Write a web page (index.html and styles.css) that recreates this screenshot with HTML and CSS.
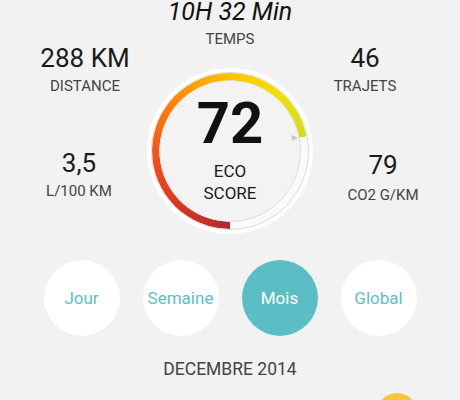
FILE: index.html
```html
<!DOCTYPE html>
<html>

<head>
  <title>Eco Score</title>
  <link rel="stylesheet" href="styles.css">
</head>

<body>
  <div class="app">
    <div class="dashboard">
      <div class="side side-left">
        <div class="stat stat-top-left">
          <div class="stat-value">288 KM</div>
          <div class="stat-label">DISTANCE</div>
        </div>
        <div class="stat stat-bottom-left">
          <div class="stat-value">3,5</div>
          <div class="stat-label">L/100 KM</div>
        </div>
      </div>

      <div class="center">
        <div class="duration">10H 32 Min</div>
        <div class="duration-label">TEMPS</div>

        <div class="gauge">
          <div class="gauge-track"></div>
          <div class="gauge-track-inner"></div>
          <div class="gauge-arc"></div>
          <div class="gauge-marker"></div>
          <div class="gauge-score">72</div>
          <div class="gauge-caption">ECO<br>SCORE</div>
        </div>
      </div>

      <div class="side side-right">
        <div class="stat stat-top-right">
          <div class="stat-value">46</div>
          <div class="stat-label">TRAJETS</div>
        </div>
        <div class="stat stat-bottom-right">
          <div class="stat-value">79</div>
          <div class="stat-label">CO2 G/KM</div>
        </div>
      </div>
    </div>

    <div class="periods">
      <button class="period">Jour</button>
      <button class="period">Semaine</button>
      <button class="period active">Mois</button>
      <button class="period">Global</button>
    </div>

    <div class="month">DECEMBRE 2014</div>

    <div class="fab"></div>
  </div>
</body>

</html>
```

FILE: styles.css
```css
body {
  margin: 0;
  font-family: Roboto, "Liberation Sans", sans-serif;
  background: #f2f2f2;
  color: #1a1a1a;
}

.app {
  position: relative;
  height: 400px;
  overflow: hidden;
}

.dashboard {
  display: flex;
}

.side {
  width: 147px;
  display: flex;
  flex-direction: column;
  align-items: flex-start;
  padding-top: 43px;
}

.stat {
  width: 100px;
  text-align: center;
}

.stat-value {
  font-size: 26px;
  line-height: 30px;
}

.stat-label {
  font-size: 15px;
  line-height: 18px;
  margin-top: 4px;
  color: #444;
}

.stat-top-left {
  margin-left: 35px;
}

.stat-bottom-left {
  margin-left: 29px;
  margin-top: 53px;
}

.stat-top-right {
  margin-left: 2px;
}

.stat-bottom-right {
  margin-left: 20px;
  margin-top: 55px;
}

.stat-bottom-right .stat-label {
  margin-top: 6px;
}

.center {
  width: 166px;
  text-align: center;
}

.duration {
  font-size: 25px;
  line-height: 24px;
  font-style: italic;
  color: #111;
  white-space: nowrap;
  margin: 0 -40px;
}

.duration-label {
  font-size: 15px;
  line-height: 18px;
  margin-top: 6px;
  color: #444;
}

/* gauge */
.gauge {
  position: relative;
  width: 166px;
  height: 166px;
  margin-top: 20px;
  border-radius: 50%;
  background: #fff;
  box-sizing: border-box;
  padding-top: 25px;
}

.gauge-track,
.gauge-track-inner,
.gauge-arc {
  position: absolute;
  border-radius: 50%;
  box-sizing: border-box;
}

.gauge-track {
  top: 4px;
  left: 4px;
  width: 158px;
  height: 158px;
  border: 1px solid #dcdcdc;
  background: #fafafa;
}

.gauge-track-inner {
  top: 12px;
  left: 12px;
  width: 142px;
  height: 142px;
  border: 1px solid #dcdcdc;
  background: #f3f3f3;
}

.gauge-arc {
  top: 5px;
  left: 5px;
  width: 156px;
  height: 156px;
  background: conic-gradient(from 180deg,
      #b3282d 0deg,
      #e33b1e 55deg,
      #f7541a 90deg,
      #ff8a00 135deg,
      #ffc400 180deg,
      #f2e000 220deg,
      #d3db1f 259deg,
      transparent 259deg);
  -webkit-mask: radial-gradient(circle, transparent 70.5px, #000 71px);
  mask: radial-gradient(circle, transparent 70.5px, #000 71px);
}

.gauge-marker {
  position: absolute;
  left: 145px;
  top: 67px;
  width: 0;
  height: 0;
  border-left: 6px solid #c8c8c8;
  border-top: 3px solid transparent;
  border-bottom: 3px solid transparent;
}

.gauge-score {
  position: relative;
  font-size: 58px;
  line-height: 60px;
  font-weight: bold;
  color: #111;
}

.gauge-caption {
  position: relative;
  font-size: 17px;
  line-height: 22px;
  margin-top: 7px;
  color: #1a1a1a;
}

/* period buttons */
.periods {
  display: flex;
  justify-content: center;
  gap: 23px;
  margin-top: 26px;
}

.period {
  width: 76px;
  height: 76px;
  border: none;
  border-radius: 50%;
  background: #fff;
  color: #5cc0c7;
  font-family: inherit;
  font-size: 17px;
  padding: 0;
  cursor: pointer;
}

.period.active {
  background: #5bbec5;
  color: #fff;
}

.month {
  text-align: center;
  font-size: 17.5px;
  line-height: 20px;
  margin-top: 23px;
  color: #444;
}

.fab {
  position: absolute;
  left: 377px;
  top: 393px;
  width: 40px;
  height: 40px;
  border-radius: 50%;
  background: #f8c53a;
}
```
